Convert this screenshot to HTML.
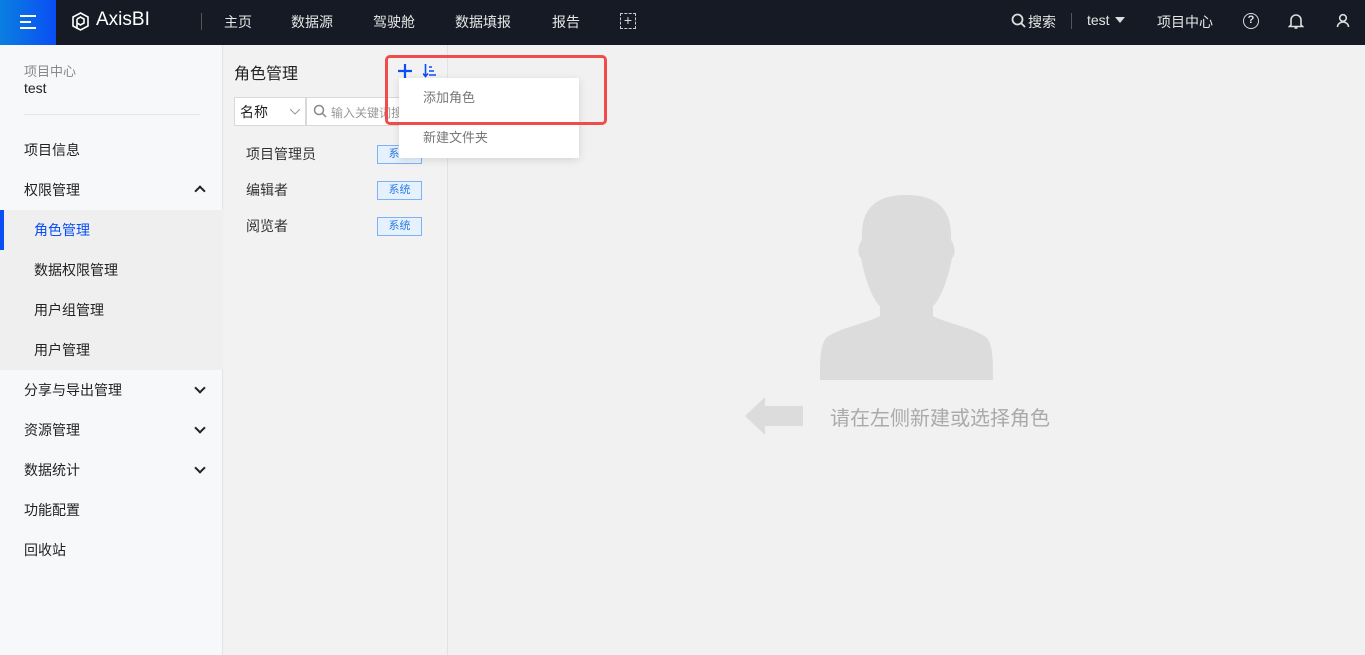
<!DOCTYPE html>
<html><head><meta charset="utf-8"><style>
*{margin:0;padding:0;box-sizing:border-box}
body{width:1365px;height:655px;overflow:hidden;font-family:"Liberation Sans","Noto Sans CJK SC",sans-serif;background:#f1f1f1;position:relative;font-size:14px;color:#333}
.hdr{position:absolute;left:0;top:0;width:1365px;height:45px;background:#151a24;color:#e6e6e6}
.hdr span{position:absolute;top:12px;font-size:14px}
.side{position:absolute;left:0;top:45px;width:223px;height:610px;background:#f7f8fa;border-right:1px solid #e4e4e4}
.side .it{position:absolute;left:24px;font-size:14px;color:#222}
.side .sub{position:absolute;left:34px;font-size:14px;color:#222}
.mid{position:absolute;left:224px;top:45px;width:224px;height:610px;background:#f2f2f2;border-right:1px solid #e2e2e2}
.tag{position:absolute;left:153px;width:45px;height:19px;border:1px solid #7fb2f5;background:#e6f1fe;color:#2f7de1;font-size:11px;text-align:center;line-height:17px}
.chev{position:absolute;left:196px;width:8px;height:8px;border-left:2px solid #222;border-top:2px solid #222}
</style></head><body>
<div class="hdr">
<div style="position:absolute;left:0;top:0;width:56px;height:45px;background:linear-gradient(90deg,#0a7fe0,#0a4ef5)"></div>
<div style="position:absolute;left:20px;top:15px;width:16px;height:2px;background:#fff"></div>
<div style="position:absolute;left:20px;top:21px;width:11px;height:2px;background:#fff"></div>
<div style="position:absolute;left:20px;top:27px;width:16px;height:2px;background:#fff"></div>
<svg style="position:absolute;left:72px;top:12px" width="17" height="20" viewBox="0 0 17 20"><path d="M8.5 1L16 5v9l-7.5 4L1 14V5z M5 7v10 M5 7l3.5-2 3.5 2v4l-3.5 2-3.5-2" fill="none" stroke="#fff" stroke-width="1.6"/></svg>
<span style="left:96px;top:9px;font-size:19px;color:#fff">AxisBI</span>
<div style="position:absolute;left:201px;top:13px;width:1px;height:17px;background:#555"></div>
<span style="left:224px">主页</span><span style="left:291px">数据源</span><span style="left:373px">驾驶舱</span><span style="left:455px">数据填报</span><span style="left:552px">报告</span>
<div style="position:absolute;left:620px;top:13px;width:16px;height:16px;border:1px dashed #ccc;color:#ddd;font-size:14px;line-height:13px;text-align:center">+</div>
<svg style="position:absolute;left:1011px;top:13px" width="15" height="15"><circle cx="6.5" cy="6.5" r="5" fill="none" stroke="#ddd" stroke-width="1.8"/><path d="M10 10l4 4" stroke="#ddd" stroke-width="1.8"/></svg>
<span style="left:1028px">搜索</span>
<div style="position:absolute;left:1071px;top:13px;width:1px;height:16px;background:#555"></div>
<span style="left:1087px">test</span>
<div style="position:absolute;left:1115px;top:17px;border:5px solid transparent;border-top:6px solid #ddd"></div>
<span style="left:1157px">项目中心</span>
<div style="position:absolute;left:1243px;top:13px;width:16px;height:16px;border:1.6px solid #ddd;border-radius:50%;font-size:11px;text-align:center;line-height:13px;font-weight:bold">?</div>
<svg style="position:absolute;left:1288px;top:12px" width="16" height="18"><path d="M3 13V8a5 5 0 0110 0v5l1.5 1.5h-13z M6.5 16h3" fill="none" stroke="#ddd" stroke-width="1.6"/></svg>
<svg style="position:absolute;left:1336px;top:13px" width="14" height="15"><circle cx="7" cy="5" r="3.3" fill="none" stroke="#ddd" stroke-width="1.6"/><path d="M1.5 14a5.5 5 0 0111 0" fill="none" stroke="#ddd" stroke-width="1.6"/></svg>
</div>
<div class="side">
<div class="it" style="top:16px;color:#888;font-size:13px">项目中心</div>
<div class="it" style="top:35px">test</div>
<div style="position:absolute;left:24px;top:69px;width:176px;height:1px;background:#e5e5e5"></div>
<div class="it" style="top:95px">项目信息</div>
<div class="it" style="top:135px">权限管理</div>
<div class="chev" style="top:142px;transform:rotate(45deg)"></div>
<div style="position:absolute;left:0;top:165px;width:223px;height:160px;background:#efefef"></div>
<div style="position:absolute;left:0;top:165px;width:4px;height:40px;background:#0a4ef5"></div>
<div class="sub" style="top:175px;color:#0a4ef5">角色管理</div>
<div class="sub" style="top:215px">数据权限管理</div>
<div class="sub" style="top:255px">用户组管理</div>
<div class="sub" style="top:295px">用户管理</div>
<div class="it" style="top:335px">分享与导出管理</div><div class="chev" style="top:339px;transform:rotate(225deg)"></div>
<div class="it" style="top:375px">资源管理</div><div class="chev" style="top:379px;transform:rotate(225deg)"></div>
<div class="it" style="top:415px">数据统计</div><div class="chev" style="top:419px;transform:rotate(225deg)"></div>
<div class="it" style="top:455px">功能配置</div>
<div class="it" style="top:495px">回收站</div>
</div>
<div class="mid">
<div style="position:absolute;left:10px;top:15px;font-size:16px;color:#222">角色管理</div>
<svg style="position:absolute;left:174px;top:19px" width="14" height="14"><path d="M7 0v14M0 7h14" stroke="#0a4ef5" stroke-width="2.2"/></svg>
<svg style="position:absolute;left:199px;top:19px" width="13" height="14"><path d="M2.5 0v12M0 9.5l2.5 3 2.5-3M6 3h3M6 7h5M6 11h7" fill="none" stroke="#0a4ef5" stroke-width="1.6"/></svg>
<div style="position:absolute;left:10px;top:52px;width:72px;height:29px;background:#fff;border:1px solid #d9d9d9;font-size:14px;padding:4px 5px;color:#222">名称<svg style="position:absolute;right:5px;top:11px" width="10" height="6"><path d="M0 0l5 5 5-5" fill="none" stroke="#999"/></svg></div>
<div style="position:absolute;left:82px;top:52px;width:142px;height:29px;background:#fff;border:1px solid #d9d9d9;font-size:12px;padding:6px 24px;color:#999">输入关键词搜</div>
<svg style="position:absolute;left:89px;top:59px" width="14" height="14"><circle cx="6" cy="6" r="4.5" fill="none" stroke="#888" stroke-width="1.5"/><path d="M9.5 9.5l3.5 3.5" stroke="#888" stroke-width="1.5"/></svg>
<div style="position:absolute;left:22px;top:99px">项目管理员</div><div class="tag" style="top:100px">系统</div>
<div style="position:absolute;left:22px;top:135px">编辑者</div><div class="tag" style="top:136px">系统</div>
<div style="position:absolute;left:22px;top:171px">阅览者</div><div class="tag" style="top:172px">系统</div>
</div>
<div style="position:absolute;left:399px;top:78px;width:180px;height:80px;background:#fff;box-shadow:0 2px 8px rgba(0,0,0,.12)"></div>
<div style="position:absolute;left:423px;top:87px;color:#777;font-size:13px">添加角色</div>
<div style="position:absolute;left:423px;top:127px;color:#777;font-size:13px">新建文件夹</div>
<div style="position:absolute;left:385px;top:55px;width:222px;height:70px;border:3px solid #f24b4b;border-radius:5px"></div>
<svg style="position:absolute;left:0;top:0" width="1365" height="655"><path d="M862 240C860 205 880 195 906 195C932 195 953 205 951 240C955 245 956 255 952 258C948 280 940 300 933 306V316C945 323 975 328 987 338C993 346 993 360 993 380H820C820 360 820 346 826 338C838 328 868 323 880 316V306C873 300 865 280 861 258C857 255 858 245 862 240Z" fill="#dcdcdc"/><path d="M745 416L765 397V406H803V426H765V435Z" fill="#dcdcdc"/></svg>
<div style="position:absolute;left:830px;top:402px;font-size:20px;color:#aaa">请在左侧新建或选择角色</div>
</body></html>
